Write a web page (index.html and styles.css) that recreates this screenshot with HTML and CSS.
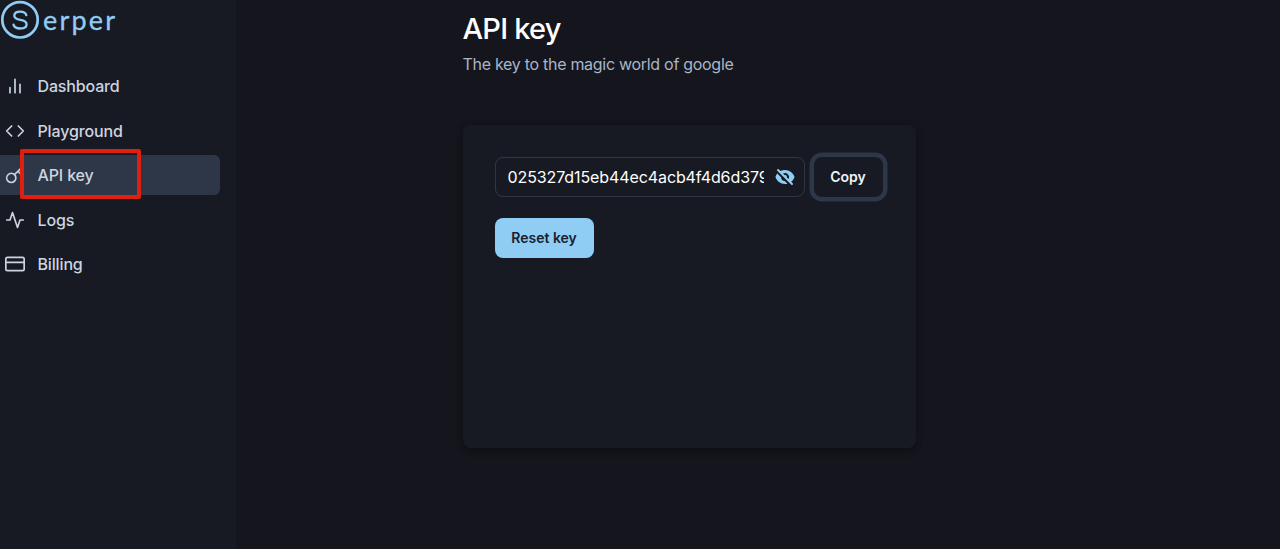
FILE: index.html
```html
<!DOCTYPE html>
<html lang="en">
<head>
<meta charset="utf-8">
<title>Serper - API key</title>
<link rel="stylesheet" href="styles.css">
</head>
<body>
<div class="app">
  <aside class="sidebar">
    <div class="logo">
      <svg class="logo-mark" width="40" height="40" viewBox="0 0 40 40" fill="none" stroke="currentColor" stroke-linecap="round">
        <circle cx="20" cy="19.8" r="17.7" stroke-width="2.7"/>
        <path d="M26.3 15.2C25.8 12.9 23.6 11.6 20.2 11.6C16.5 11.6 14.3 13.2 14.3 15.7C14.3 18.5 16.7 19.2 20.3 19.8C24.2 20.4 26.6 21.4 26.6 24.2C26.6 27 24.1 28.5 20.3 28.5C16.6 28.5 14.1 27 13.5 24.6" stroke-width="2.3"/>
      </svg>
      <span class="logo-text">erper</span>
    </div>
    <nav class="nav">
      <a class="nav-item"><svg class="icon" viewBox="0 0 24 24"><path d="M18 20V10M12 20V4M6 20v-6"/></svg><span>Dashboard</span></a>
      <a class="nav-item"><svg class="icon" viewBox="0 0 24 24"><path d="M16 18l6-6-6-6M8 6l-6 6 6 6"/></svg><span>Playground</span></a>
      <a class="nav-item active"><svg class="icon" viewBox="0 0 24 24"><path d="M21 2l-2 2m-7.61 7.61a5.5 5.5 0 1 1-7.778 7.778 5.5 5.5 0 0 1 7.777-7.777zm0 0L15.5 7.5m0 0l3 3L22 7l-3-3m-3.5 3.5L19 4"/></svg><span>API key</span><i class="highlight"></i></a>
      <a class="nav-item"><svg class="icon" viewBox="0 0 24 24"><path d="M22 12h-4l-3 9L9 3l-3 9H2"/></svg><span>Logs</span></a>
      <a class="nav-item"><svg class="icon" viewBox="0 0 24 24"><rect x="1" y="4" width="22" height="16" rx="2"/><path d="M1 10h22"/></svg><span>Billing</span></a>
    </nav>
  </aside>
  <main class="main">
    <h1 class="title">API key</h1>
    <p class="subtitle">The key to the magic world of google</p>
    <section class="card">
      <div class="row">
        <div class="field">
          <span class="key">025327d15eb44ec4acb4f4d6d379</span>
          <svg class="eye" viewBox="0 0 20 20" fill="currentColor"><path fill-rule="evenodd" d="M3.707 2.293a1 1 0 00-1.414 1.414l14 14a1 1 0 001.414-1.414l-1.473-1.473A10.014 10.014 0 0019.542 10C18.268 5.943 14.478 3 10 3a9.958 9.958 0 00-4.512 1.074l-1.78-1.781zm4.261 4.26l1.514 1.515a2.003 2.003 0 012.45 2.45l1.514 1.514a4 4 0 00-5.478-5.478z" clip-rule="evenodd"/><path d="M12.454 16.697L9.75 13.992a4 4 0 01-3.742-3.741L2.335 6.578A9.98 9.98 0 00.458 10c1.274 4.057 5.065 7 9.542 7 .847 0 1.669-.105 2.454-.303z"/></svg>
        </div>
        <button class="btn copy">Copy</button>
      </div>
      <button class="btn reset">Reset key</button>
    </section>
  </main>
</div>
</body>
</html>
```
FILE: styles.css
```css
* { box-sizing: border-box; }
body {
  margin: 0;
  background: #15151e;
  color: #fff;
  font-family: Inter, "Liberation Sans", sans-serif;
  font-size: 16px;
}
.app { display: flex; height: 549px; overflow: hidden; }
.sidebar { width: 236px; flex: none; background: #181a23; }
.logo { display: flex; height: 66px; color: #90cdf4; }
.logo-mark { flex: none; }
.logo-text {
  margin-left: 3px;
  font: 400 27px/40px Lato, sans-serif;
  letter-spacing: 2.2px;
  -webkit-text-stroke: .3px currentColor;
}
.nav { display: flex; flex-direction: column; gap: 4.5px; }
.nav-item {
  position: relative;
  display: flex;
  align-items: center;
  gap: 12.5px;
  width: 220px;
  height: 40px;
  padding-left: 5px;
  border-radius: 0 6px 6px 0;
  color: #cbd5e0;
  font-weight: 500;
  letter-spacing: -.15px;
}
.active { background: #2d3748; }
.icon {
  width: 20px;
  height: 20px;
  fill: none;
  stroke: currentColor;
  stroke-width: 2;
  stroke-linecap: round;
  stroke-linejoin: round;
}
.highlight {
  position: absolute;
  left: 20px;
  top: -6px;
  width: 121px;
  height: 50px;
  border: 4px solid #df2010;
  border-radius: 2px;
}
.main { padding: 11px 0 0 226.5px; }
.title { margin: 0; font-size: 29px; font-weight: 500; line-height: 36px; letter-spacing: -.75px; }
.subtitle { margin: 5px 0 0; color: #a9b6c8; line-height: 24px; letter-spacing: -.29px; }
.card {
  width: 453px;
  height: 323px;
  margin-top: 49px;
  padding: 32px;
  border-radius: 8px;
  background: #181a23;
  box-shadow: 0 4px 6px rgba(0, 0, 0, .2), 0 1px 8px rgba(0, 0, 0, .15);
}
.row { display: flex; gap: 9px; }
.field {
  display: flex;
  align-items: center;
  justify-content: space-between;
  width: 310px;
  height: 40px;
  padding: 0 9px 0 12px;
  border: 1px solid #2d3748;
  border-radius: 8px;
}
.key { width: 256px; overflow: hidden; white-space: nowrap; line-height: 24px; letter-spacing: -.1px; }
.eye { width: 20px; height: 20px; color: #90cdf4; }
.btn {
  height: 40px;
  padding: 0 0 1px;
  border: 0;
  border-radius: 8px;
  font: 600 14px Inter, sans-serif;
}
.copy { width: 69px; background: #181a23; color: #edf2f7; box-shadow: 0 0 0 4.5px #2d3748; }
.reset { width: 99px; margin-top: 20.5px; background: #90cdf4; color: #1a202c; }
```
